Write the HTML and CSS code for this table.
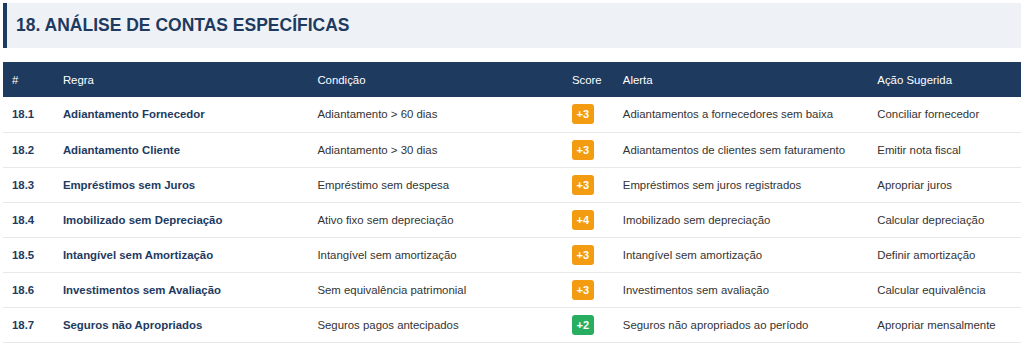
FILE: index.html
```html
<!DOCTYPE html>
<html lang="pt">
<head>
<meta charset="utf-8">
<link rel="stylesheet" href="styles.css">
</head>
<body>
<div class="page">
  <h2 class="section-title">18. ANÁLISE DE CONTAS ESPECÍFICAS</h2>
  <table class="rules">
    <colgroup>
      <col class="c-num"><col class="c-wide"><col class="c-wide"><col class="c-num"><col class="c-wide"><col class="c-act">
    </colgroup>
    <thead>
      <tr><th>#</th><th>Regra</th><th>Condição</th><th>Score</th><th>Alerta</th><th>Ação Sugerida</th></tr>
    </thead>
    <tbody>
      <tr><td class="b">18.1</td><td class="b">Adiantamento Fornecedor</td><td>Adiantamento &gt; 60 dias</td><td><span class="badge warn">+3</span></td><td>Adiantamentos a fornecedores sem baixa</td><td>Conciliar fornecedor</td></tr>
      <tr><td class="b">18.2</td><td class="b">Adiantamento Cliente</td><td>Adiantamento &gt; 30 dias</td><td><span class="badge warn">+3</span></td><td>Adiantamentos de clientes sem faturamento</td><td>Emitir nota fiscal</td></tr>
      <tr><td class="b">18.3</td><td class="b">Empréstimos sem Juros</td><td>Empréstimo sem despesa</td><td><span class="badge warn">+3</span></td><td>Empréstimos sem juros registrados</td><td>Apropriar juros</td></tr>
      <tr><td class="b">18.4</td><td class="b">Imobilizado sem Depreciação</td><td>Ativo fixo sem depreciação</td><td><span class="badge warn">+4</span></td><td>Imobilizado sem depreciação</td><td>Calcular depreciação</td></tr>
      <tr><td class="b">18.5</td><td class="b">Intangível sem Amortização</td><td>Intangível sem amortização</td><td><span class="badge warn">+3</span></td><td>Intangível sem amortização</td><td>Definir amortização</td></tr>
      <tr><td class="b">18.6</td><td class="b">Investimentos sem Avaliação</td><td>Sem equivalência patrimonial</td><td><span class="badge warn">+3</span></td><td>Investimentos sem avaliação</td><td>Calcular equivalência</td></tr>
      <tr><td class="b">18.7</td><td class="b">Seguros não Apropriados</td><td>Seguros pagos antecipados</td><td><span class="badge ok">+2</span></td><td>Seguros não apropriados ao período</td><td>Apropriar mensalmente</td></tr>
    </tbody>
  </table>
</div>
</body>
</html>
```

FILE: styles.css
```css
* { box-sizing: border-box; }
html, body { margin: 0; padding: 0; background: #fff; }
body { font-family: "Liberation Sans", Arial, sans-serif; color: #333; }
.page { padding: 3px; }
.section-title {
  margin: 0 0 14px 0;
  height: 45px;
  display: flex;
  align-items: center;
  padding-left: 9px;
  background: #eef2f7;
  border-left: 4px solid #1e3a5f;
  color: #1e3a5f;
  font-size: 17.5px;
  font-weight: bold;
}
.rules {
  width: 100%;
  border-collapse: collapse;
  table-layout: fixed;
  font-size: 11.4px;
}
.c-num { width: 5%; }
.c-wide { width: 25%; }
.c-act { width: 15%; }
.rules th {
  background: #1e3a5f;
  color: #fff;
  font-weight: normal;
  text-align: left;
  height: 35px;
  padding: 0 9px;
}
.rules td {
  height: 35px;
  padding: 0 9px;
  border-bottom: 1px solid #e6e8eb;
  white-space: nowrap;
}
.rules td.b { font-weight: bold; color: #1e3a5f; }
.badge {
  display: inline-block;
  width: 22px;
  height: 20px;
  line-height: 20px;
  text-align: center;
  border-radius: 3px;
  color: #fff;
  font-weight: bold;
  font-size: 11px;
  vertical-align: middle;
}
.badge.warn { background: #f39c12; }
.badge.ok { background: #27ae60; }
```
